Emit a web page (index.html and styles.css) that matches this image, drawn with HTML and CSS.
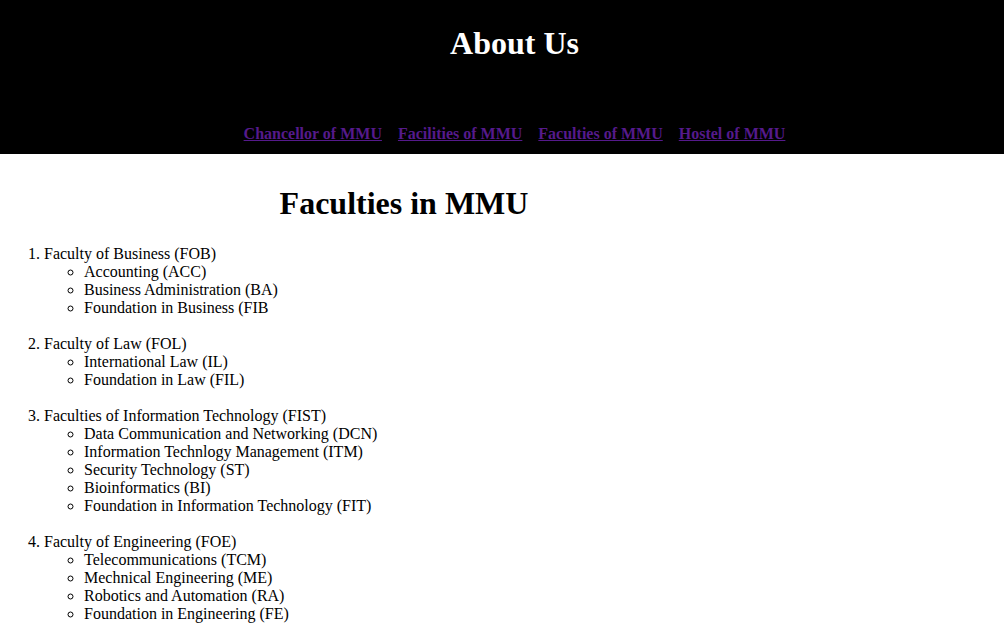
FILE: index.html
```html
<!DOCTYPE html>
<html lang="en">
<head>
<meta charset="utf-8">
<title>About Us</title>
<link rel="stylesheet" href="styles.css">
</head>
<body>
<header class="site-header">
  <h1 class="site-title">About Us</h1>
  <nav class="site-nav">
    <a href="#chancellor">Chancellor of MMU</a>
    <a href="#facilities">Facilities of MMU</a>
    <a href="#faculties">Faculties of MMU</a>
    <a href="#hostel">Hostel of MMU</a>
  </nav>
</header>
<main class="content">
  <h1 class="page-title">Faculties in MMU</h1>
  <ol class="faculties">
    <li>Faculty of Business (FOB)
      <ul class="programmes">
        <li>Accounting (ACC)</li>
        <li>Business Administration (BA)</li>
        <li>Foundation in Business (FIB</li>
      </ul>
    </li>
    <li>Faculty of Law (FOL)
      <ul class="programmes">
        <li>International Law (IL)</li>
        <li>Foundation in Law (FIL)</li>
      </ul>
    </li>
    <li>Faculties of Information Technology (FIST)
      <ul class="programmes">
        <li>Data Communication and Networking (DCN)</li>
        <li>Information Technlogy Management (ITM)</li>
        <li>Security Technology (ST)</li>
        <li>Bioinformatics (BI)</li>
        <li>Foundation in Information Technology (FIT)</li>
      </ul>
    </li>
    <li>Faculty of Engineering (FOE)
      <ul class="programmes">
        <li>Telecommunications (TCM)</li>
        <li>Mechnical Engineering (ME)</li>
        <li>Robotics and Automation (RA)</li>
        <li>Foundation in Engineering (FE)</li>
      </ul>
    </li>
  </ol>
</main>
</body>
</html>
```

FILE: styles.css
```css
html, body {
  margin: 0;
  padding: 0;
  background: #ffffff;
}

body {
  font-family: "Liberation Serif", "Times New Roman", serif;
  font-size: 16px;
  line-height: 18px;
  color: #000000;
}

.site-header {
  background: #000000;
  padding: 25px 0 11px 25px;
  text-align: center;
}

.site-title {
  margin: 0;
  font-size: 32px;
  line-height: 37px;
  font-weight: bold;
  color: #ffffff;
}

.site-nav {
  margin-top: 63px;
  display: flex;
  justify-content: center;
  gap: 16px;
  font-weight: bold;
  line-height: 18px;
}

.site-nav a {
  color: #551a8b;
  text-decoration: underline;
}

.content {
  padding-right: 196px;
}

.page-title {
  margin: 31px 0 23px 0;
  font-size: 32px;
  line-height: 37px;
  font-weight: bold;
  text-align: center;
}

.faculties {
  margin: 0;
  padding-left: 44px;
}

.faculties > li {
  margin-bottom: 18px;
}

.programmes {
  margin: 0;
  padding-left: 40px;
  list-style-type: circle;
}
```
